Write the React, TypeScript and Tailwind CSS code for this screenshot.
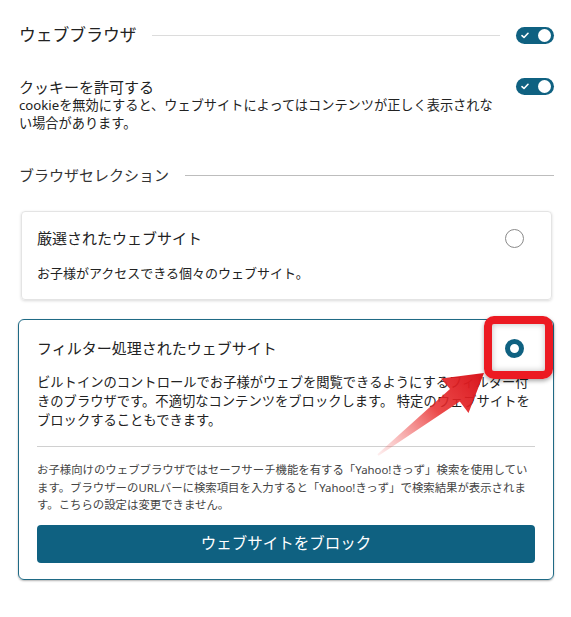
const TEAL = "bg-[#0f6181]";

function Toggle() {
  return (
    <div className={`w-[38px] h-[17px] rounded-full ${TEAL} flex items-center justify-between pl-[5px] pr-[3px] shrink-0`}>
      <svg width="8" height="7" viewBox="0 0 8 7" fill="none">
        <path d="M1 3.6 L3 5.5 L7 1.3" stroke="white" strokeWidth="1.6" strokeLinecap="round" strokeLinejoin="round" />
      </svg>
      <div className="w-[13px] h-[13px] rounded-full bg-white" />
    </div>
  );
}

function Radio({ checked }: { checked?: boolean }) {
  if (checked) {
    return <div className="w-[19px] h-[19px] rounded-full border-[5px] border-[#0f6181] bg-white shrink-0" />;
  }
  return <div className="w-[19px] h-[19px] rounded-full border border-[#8a8a8a] bg-white shrink-0" />;
}

function Arrow() {
  return (
    <svg className="absolute left-0 top-0 pointer-events-none" width="571" height="617" viewBox="0 0 571 617">
      <defs>
        <linearGradient id="arr" x1="378" y1="455" x2="484" y2="373" gradientUnits="userSpaceOnUse">
          <stop offset="0" stopColor="#f05a5a" stopOpacity="0.1" />
          <stop offset="0.55" stopColor="#e82a2a" stopOpacity="0.85" />
          <stop offset="1" stopColor="#d8141c" stopOpacity="1" />
        </linearGradient>
      </defs>
      <polygon
        points="377.4,454.2 450,389 441,378.5 484,373 468.5,413 459.8,401.6 378.6,455.8"
        fill="url(#arr)"
      />
    </svg>
  );
}

// note lines are broken where the reference breaks them
const NOTE = [
  "お子様向けのウェブブラウザではセーフサーチ機能を有する「Yahoo!きっず」検索を使用してい",
  "ます。ブラウザーのURLバーに検索項目を入力すると「Yahoo!きっず」で検索結果が表示されま",
  "す。こちらの設定は変更できません。",
];

export default function App() {
  return (
    <div
      className="relative w-[571px] h-[617px] bg-white text-[#222] overflow-hidden"
      style={{ fontFamily: '"Noto Sans", "Noto Sans CJK JP", sans-serif' }}
    >
      <div className="pl-[19px] pr-[17px] pt-[23px]">
        {/* web browser */}
        <div className="flex items-center h-[24px]">
          <span className="text-[16.8px] leading-[24px]">ウェブブラウザ</span>
          <div className="flex-1 h-px bg-[#dcdcdc] mx-[16px]" />
          <Toggle />
        </div>

        {/* cookies */}
        <div className="flex items-start justify-between mt-[30px]">
          <div className="w-[480px]">
            <div className="text-[15px] leading-[20px]">クッキーを許可する</div>
            <p className="text-[13.2px] leading-[17.5px]">
              cookieを無効にすると、ウェブサイトによってはコンテンツが正しく表示されない場合があります。
            </p>
          </div>
          <div className="mt-[1px]">
            <Toggle />
          </div>
        </div>

        {/* browser selection */}
        <div className="flex items-center h-[22px] mt-[32px]">
          <span className="text-[15px] leading-[22px] text-[#333]">ブラウザセレクション</span>
          <div className="flex-1 h-px bg-[#bdbdbd] ml-[16px]" />
        </div>

        <div className="mx-[2px] mt-[25px] border border-[#e4e4e4] rounded-[4px] shadow-[0_1px_3px_rgba(0,0,0,0.15)] pl-[15px] pr-[27px] pt-[15px] pb-[17px]">
          <div className="flex items-center justify-between h-[22px]">
            <span className="text-[15px] leading-[22px]">厳選されたウェブサイト</span>
            <Radio />
          </div>
          <p className="mt-[15px] text-[13px] leading-[18px]">お子様がアクセスできる個々のウェブサイト。</p>
        </div>

        <div className="relative -ml-[1px] mt-[19px] border border-[#1f6a85] rounded-[6px] shadow-[0_1px_2px_rgba(0,0,0,0.3)] px-[18px] pt-[17px] pb-[16px]">
          <div className="flex items-center justify-between h-[22px]">
            <span className="text-[15px] leading-[22px]">フィルター処理されたウェブサイト</span>
            <div className="mr-[11px]">
              <Radio checked />
            </div>
          </div>
          <p className="mt-[14px] text-[13.3px] leading-[19px]">
            ビルトインのコントロールでお子様がウェブを閲覧できるようにするフィルター付きのブラウザです。不適切なコンテンツをブロックします。 特定のウェブサイトをブロックすることもできます。
          </p>
          <div className="mt-[16px] h-px bg-[#d0d0d0]" />
          <div className="mt-[14px] text-[11.4px] leading-[17.5px] text-[#444]">
            {NOTE.map((line) => (
              <div key={line} className="whitespace-nowrap">
                {line}
              </div>
            ))}
          </div>
          <button className={`mt-[11px] w-full h-[38px] rounded-[4px] ${TEAL} text-white text-[15.5px]`}>
            ウェブサイトをブロック
          </button>

          <div className="absolute left-[465px] top-[-4px] w-[69px] h-[63px] border-[8px] border-[#ec1a22] rounded-[10px] shadow-[inset_0_0_6px_rgba(0,0,0,0.25),0_2px_4px_rgba(0,0,0,0.35)]" />
        </div>
      </div>

      <Arrow />
    </div>
  );
}
